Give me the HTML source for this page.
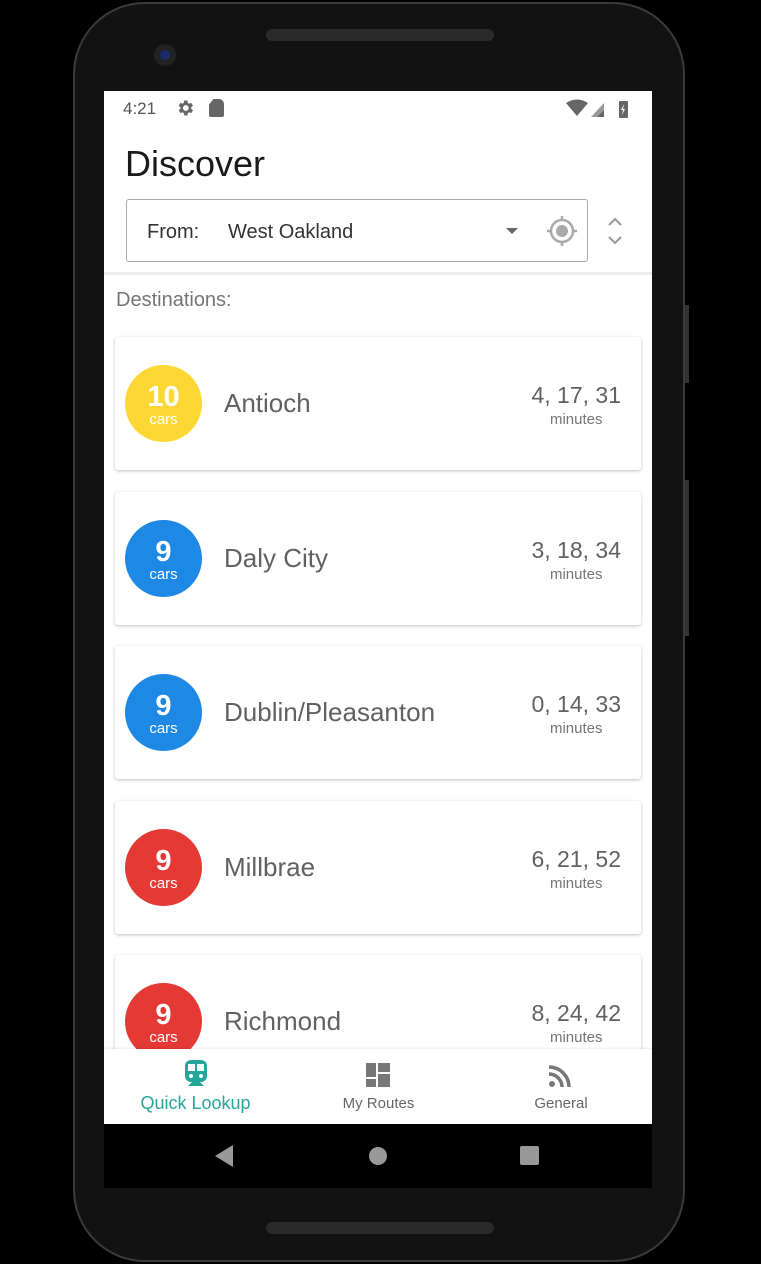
<!DOCTYPE html>
<html><head><meta charset="utf-8"><style>
*{margin:0;padding:0;box-sizing:border-box}
body{width:761px;height:1264px;background:#000;position:relative;overflow:hidden;font-family:"Liberation Sans",Roboto,sans-serif}
.phone{position:absolute;left:73px;top:2px;width:612px;height:1260px;border-radius:72px;background:#121212;border:2px solid #3a3a3a}
.screen{position:absolute;left:104px;top:91px;width:548px;height:1097px;background:#fff;overflow:hidden}
.abs{position:absolute}
.card{position:absolute;left:11px;width:526px;height:133px;background:#fff;border-radius:3px;box-shadow:0 1px 3px rgba(0,0,0,.25)}
.circ{position:absolute;left:10px;top:28px;width:77px;height:77px;border-radius:50%;color:#fff;text-align:center}
.circ b{display:block;font-size:29px;font-weight:bold;margin-top:17px;line-height:30px}
.circ span{display:block;font-size:15px;line-height:15px}
.name{position:absolute;left:109px;top:51px;font-size:26px;color:#616161}
.times{position:absolute;right:20px;top:44px;text-align:center;color:#616161}
.times div{font-size:23px;line-height:28px}
.times span{font-size:15px;color:#757575;display:block;margin-top:2px}
</style></head><body>
<div class="phone"></div>
<div class="abs" style="left:266px;top:29px;width:228px;height:12px;border-radius:6px;background:#2a2a2a"></div>
<div class="abs" style="left:266px;top:1222px;width:228px;height:12px;border-radius:6px;background:#2a2a2a"></div>
<div class="abs" style="left:154px;top:44px;width:22px;height:22px;border-radius:50%;background:#222"><div style="margin:6px;width:10px;height:10px;border-radius:50%;background:#1c2a6a"></div></div>
<div class="abs" style="left:685px;top:305px;width:4px;height:78px;background:#333"></div>
<div class="abs" style="left:685px;top:480px;width:4px;height:156px;background:#333"></div>
<div class="screen">
  <div class="abs" style="left:19px;top:8px;font-size:17px;color:#555">4:21</div>
  <svg class="abs" style="left:71px;top:7px" width="20" height="20" viewBox="0 0 24 24"><path fill="#666" d="M19.4 13a7.5 7.5 0 000-2l2.1-1.6-2-3.5-2.5 1a7 7 0 00-1.7-1L15 3h-4l-.4 2.9a7 7 0 00-1.7 1l-2.5-1-2 3.5L6.6 11a7.5 7.5 0 000 2l-2.1 1.6 2 3.5 2.5-1a7 7 0 001.7 1L11 21h4l.4-2.9a7 7 0 001.7-1l2.5 1 2-3.5zM13 15.5a3.5 3.5 0 110-7 3.5 3.5 0 010 7z"/></svg>
  <div class="abs" style="left:105px;top:8px;width:15px;height:18px;background:#666;border-radius:2px 5px 2px 2px;clip-path:polygon(30% 0,100% 0,100% 100%,0 100%,0 30%)"></div>
  <svg class="abs" style="left:462px;top:8px" width="62" height="20" viewBox="0 0 62 20"><path fill="#666" d="M0 4Q11-3 22 4L11 17z"/><path fill="#999" d="M25 18L38 4V18z"/><path fill="#666" d="M31 18L38 11V18z"/><rect x="53" y="2" width="9" height="17" rx="1" fill="#666"/><path fill="#fff" d="M58 5l-3 6h2l-1 5 3-6h-2z"/></svg>
  <div class="abs" style="left:21px;top:52px;font-size:36px;color:#1a1a1a">Discover</div>
  <div class="abs" style="left:22px;top:108px;width:462px;height:63px;border:1px solid #aaa;border-radius:3px"></div>
  <div class="abs" style="left:43px;top:130px;font-size:20px;color:#333">From:</div>
  <div class="abs" style="left:124px;top:130px;font-size:20px;color:#333">West Oakland</div>
  <div class="abs" style="left:402px;top:137px;border-left:6px solid transparent;border-right:6px solid transparent;border-top:6px solid #666"></div>
  <svg class="abs" style="left:442px;top:124px" width="32" height="32" viewBox="0 0 32 32"><circle cx="16" cy="16" r="11" fill="none" stroke="#aaa" stroke-width="2.5"/><circle cx="16" cy="16" r="6" fill="#aaa"/><path d="M16 1v5M16 26v5M1 16h5M26 16h5" stroke="#aaa" stroke-width="2.5"/></svg>
  <svg class="abs" style="left:503px;top:126px" width="16" height="28" viewBox="0 0 16 28"><path d="M2 8l6-6 6 6M2 20l6 6 6-6" fill="none" stroke="#999" stroke-width="2"/></svg>
  <div class="abs" style="left:0;top:181px;width:548px;height:3px;background:#eee"></div>
  <div class="abs" style="left:12px;top:198px;font-size:20px;color:#757575">Destinations:</div>

  <div class="card" style="top:246px"><div class="circ" style="background:#fdd835"><b>10</b><span>cars</span></div><div class="name">Antioch</div><div class="times"><div>4, 17, 31</div><span>minutes</span></div></div>
  <div class="card" style="top:401px"><div class="circ" style="background:#1e88e5"><b>9</b><span>cars</span></div><div class="name">Daly City</div><div class="times"><div>3, 18, 34</div><span>minutes</span></div></div>
  <div class="card" style="top:555px"><div class="circ" style="background:#1e88e5"><b>9</b><span>cars</span></div><div class="name">Dublin/Pleasanton</div><div class="times"><div>0, 14, 33</div><span>minutes</span></div></div>
  <div class="card" style="top:710px"><div class="circ" style="background:#e53935"><b>9</b><span>cars</span></div><div class="name">Millbrae</div><div class="times"><div>6, 21, 52</div><span>minutes</span></div></div>
  <div class="card" style="top:864px"><div class="circ" style="background:#e53935"><b>9</b><span>cars</span></div><div class="name">Richmond</div><div class="times"><div>8, 24, 42</div><span>minutes</span></div></div>

  <div class="abs" style="left:0;top:958px;width:548px;height:75px;background:#fff;box-shadow:0 -1px 2px rgba(0,0,0,.08)">
    <svg class="abs" style="left:80px;top:10px" width="24" height="28" viewBox="0 0 24 28"><rect x="1" y="1" width="22" height="22" rx="6" fill="#26a69a"/><rect x="4" y="5" width="7" height="7" fill="#fff"/><rect x="13" y="5" width="7" height="7" fill="#fff"/><circle cx="7" cy="17" r="2" fill="#fff"/><circle cx="17" cy="17" r="2" fill="#fff"/><path d="M4 27l4-4h8l4 4" fill="#26a69a"/></svg>
    <div class="abs" style="left:0;width:183px;top:44px;text-align:center;font-size:18px;color:#26a69a">Quick Lookup</div>
    <svg class="abs" style="left:262px;top:14px" width="24" height="24" viewBox="0 0 24 24"><rect x="0" y="0" width="10" height="14" fill="#777"/><rect x="12" y="0" width="12" height="9" fill="#777"/><rect x="0" y="16" width="10" height="8" fill="#777"/><rect x="12" y="11" width="12" height="13" fill="#777"/></svg>
    <div class="abs" style="left:183px;width:183px;top:46px;text-align:center;font-size:15px;color:#666">My Routes</div>
    <svg class="abs" style="left:445px;top:16px" width="22" height="22" viewBox="0 0 22 22"><circle cx="3" cy="19" r="3" fill="#777"/><path d="M0 9a13 13 0 0113 13M0 2a20 20 0 0120 20" fill="none" stroke="#777" stroke-width="3.5"/></svg>
    <div class="abs" style="left:366px;width:182px;top:46px;text-align:center;font-size:15px;color:#666">General</div>
  </div>
  <div class="abs" style="left:0;top:1033px;width:548px;height:64px;background:#000">
    <div class="abs" style="left:111px;top:21px;border-top:11px solid transparent;border-bottom:11px solid transparent;border-right:18px solid #999"></div>
    <div class="abs" style="left:265px;top:23px;width:18px;height:18px;border-radius:50%;background:#999"></div>
    <div class="abs" style="left:416px;top:22px;width:19px;height:19px;border-radius:2px;background:#999"></div>
  </div>
</div>
</body></html>
